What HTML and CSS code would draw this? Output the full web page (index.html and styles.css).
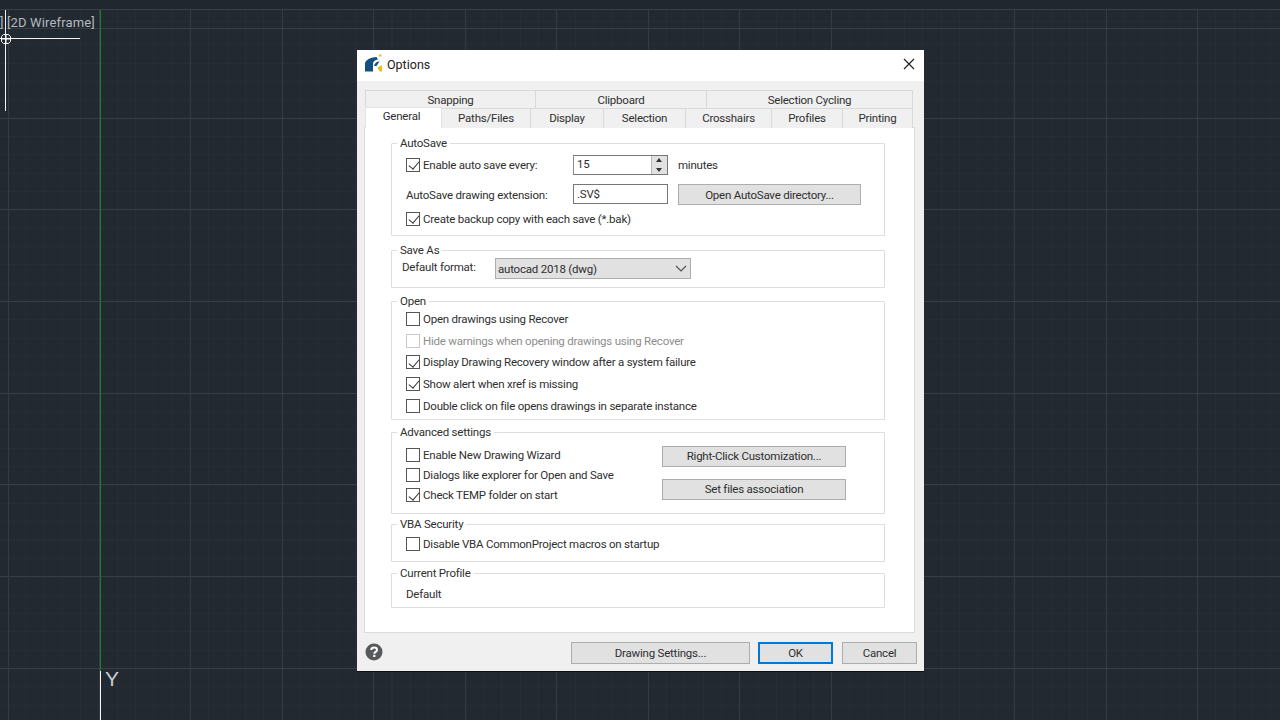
FILE: index.html
```html
<!DOCTYPE html>
<html lang="en">
<head>
<meta charset="utf-8">
<title>Options</title>
<link rel="stylesheet" href="styles.css">
</head>
<body>
<main class="canvas">
  <div class="view-label">] [2D Wireframe]</div>
  <div class="cross-h"></div>
  <div class="cross-v"></div>
  <svg class="cross-box" width="12" height="12" viewBox="0 0 12 12"><path d="M3.500 1.500h5l2 2v5l-2 2h-5l-2-2v-5zM1.500 6h9M6 1.500v9" fill="none" stroke="#fff" stroke-width="1"/></svg>
  <div class="axis-green"></div>
  <div class="axis-white"></div>
  <div class="axis-y">Y</div>

  <section class="dialog">
    <header class="titlebar">
      <svg class="logo" width="20" height="20" viewBox="0 0 20 20">
        <path d="M1 17.500V9C2 6 6 3.500 12.500 3L14 5.500C11 6 9 7.500 9 10V17.500Z" fill="#14507f"/>
        <path d="M10 12C10.500 9.500 12.500 7.500 15.500 7.500L12.500 12Z" fill="#14507f"/>
        <path d="M13.500 13.500L18 11V17.500H15.500Z" fill="#f3bb16"/>
        <path d="M15 .5H17.500V2.500H15Z" fill="#f3bb16"/>
      </svg>
      <span class="title">Options</span>
      <svg class="close" width="12" height="12" viewBox="0 0 12 12"><path d="M1 1L11 11M11 1L1 11" stroke="#222" stroke-width="1.200"/></svg>
    </header>

    <div class="content">
      <nav class="tabs-back">
        <div class="tab w-snap">Snapping</div>
        <div class="tab w-clip">Clipboard</div>
        <div class="tab w-cycle">Selection Cycling</div>
      </nav>
      <nav class="tabs-front">
        <div class="tab tab-active w-general">General</div>
        <div class="tab w-paths">Paths/Files</div>
        <div class="tab w-display">Display</div>
        <div class="tab w-sel">Selection</div>
        <div class="tab w-cross">Crosshairs</div>
        <div class="tab w-prof">Profiles</div>
        <div class="tab w-print">Printing</div>
      </nav>

      <div class="page">
        <section class="group g-autosave">
          <h2 class="legend">AutoSave</h2>
          <div class="row r-save1">
            <label class="check"><span class="box on"></span>Enable auto save every:</label>
            <div class="spin"><span class="spin-value">15</span><span class="spin-btns"><i class="up"></i><i class="down"></i></span></div>
            <span class="minutes">minutes</span>
          </div>
          <div class="row r-save2">
            <span class="ext-label">AutoSave drawing extension:</span>
            <div class="input">.SV$</div>
            <button class="btn b-dir">Open AutoSave directory...</button>
          </div>
          <label class="check r-save3"><span class="box on"></span>Create backup copy with each save (*.bak)</label>
        </section>

        <section class="group g-saveas">
          <h2 class="legend">Save As</h2>
          <div class="row">
            <span class="fmt-label">Default format:</span>
            <div class="select"><span class="select-value">autocad 2018 (dwg)</span><svg width="12" height="7" viewBox="0 0 12 7"><path d="M1 1L6 6L11 1" fill="none" stroke="#555" stroke-width="1.200"/></svg></div>
          </div>
        </section>

        <section class="group g-open">
          <h2 class="legend">Open</h2>
          <label class="check"><span class="box"></span>Open drawings using Recover</label>
          <label class="check off"><span class="box"></span>Hide warnings when opening drawings using Recover</label>
          <label class="check"><span class="box on"></span>Display Drawing Recovery window after a system failure</label>
          <label class="check"><span class="box on"></span>Show alert when xref is missing</label>
          <label class="check"><span class="box"></span>Double click on file opens drawings in separate instance</label>
        </section>

        <section class="group g-adv">
          <h2 class="legend">Advanced settings</h2>
          <div class="adv-checks">
            <label class="check"><span class="box"></span>Enable New Drawing Wizard</label>
            <label class="check"><span class="box"></span>Dialogs like explorer for Open and Save</label>
            <label class="check"><span class="box on"></span>Check TEMP folder on start</label>
          </div>
          <div class="adv-btns">
            <button class="btn b-adv">Right-Click Customization...</button>
            <button class="btn b-adv">Set files association</button>
          </div>
        </section>

        <section class="group g-vba">
          <h2 class="legend">VBA Security</h2>
          <label class="check"><span class="box"></span>Disable VBA CommonProject macros on startup</label>
        </section>

        <section class="group g-profile">
          <h2 class="legend">Current Profile</h2>
          <div class="profile-name">Default</div>
        </section>
      </div>
    </div>

    <footer class="footer">
      <svg class="help" width="18" height="18" viewBox="0 0 18 18"><circle cx="9" cy="9" r="8.500" fill="#58595b"/><path d="M6.200 7C6.300 5.300 7.500 4.500 9.100 4.500C10.800 4.500 12 5.400 12 6.900C12 8.800 9.300 8.900 9.300 10.700" fill="none" stroke="#fff" stroke-width="2"/><rect x="8.200" y="11.800" width="2.200" height="2.200" fill="#fff"/></svg>
      <button class="btn f-draw">Drawing Settings...</button>
      <button class="btn f-ok">OK</button>
      <button class="btn f-cancel">Cancel</button>
    </footer>
  </section>
</main>
</body>
</html>
```
FILE: styles.css
```css
* { box-sizing: border-box; }
html, body { margin: 0; padding: 0; width: 1280px; height: 720px; overflow: hidden; }
body { font-family: Roboto, "Liberation Sans", sans-serif; }

.canvas {
  position: relative;
  width: 1280px;
  height: 720px;
  background-color: #222931;
  background-image:
    linear-gradient(#21272f, #21272f),
    linear-gradient(#373e48, #373e48),
    linear-gradient(#373e48, #373e48),
    linear-gradient(#343b45, #343b45),
    repeating-linear-gradient(to bottom, transparent 0, transparent 90.7px, #373e48 90.7px, #373e48 91.7px),
    repeating-linear-gradient(to right, transparent 0, transparent 90.55px, #343b45 90.55px, #343b45 91.55px),
    repeating-linear-gradient(to right, transparent 0, transparent 17.3px, #262d36 17.3px, #262d36 18.31px),
    repeating-linear-gradient(to bottom, transparent 0, transparent 17.3px, #262d36 17.3px, #262d36 18.34px);
  background-size: 100% 9px, 100% 1px, 100% 1px, 1px 100%, 100% 100%, 100% 100%, 100% 100%, 100% 100%;
  background-position: 0 0, 0 9px, 0 28px, 8px 0, 0 27px, 8px 0, 8px 0, 0 27px;
  background-repeat: no-repeat, no-repeat, no-repeat, no-repeat, repeat, repeat, repeat, repeat;
}

.view-label {
  position: absolute; left: 0; top: 15px;
  font: 13px/16px Roboto, sans-serif;
  letter-spacing: 0.15px;
  color: #b4b9be;
  white-space: nowrap;
}
.cross-h { position: absolute; left: 0; top: 38px; width: 80px; height: 1px; background: #f2f2f2; }
.cross-v { position: absolute; left: 5px; top: 10px; width: 1px; height: 101px; background: #f2f2f2; }
.cross-box { position: absolute; left: 0; top: 33px; }
.axis-green { position: absolute; left: 100px; top: 10px; width: 1px; height: 661px; background: #13862c; }
.axis-white { position: absolute; left: 100px; top: 671px; width: 1px; height: 49px; background: #f5f5f5; }
.axis-y { position: absolute; left: 105px; top: 667px; font: 21px/24px "Liberation Sans", sans-serif; color: #c8ccd0; }

.dialog {
  position: absolute; left: 357px; top: 50px;
  width: 567px; height: 621px;
  background: #f0f0f0;
  display: flex; flex-direction: column;
  box-shadow: 0 1px 0 #111;
  font-size: 11.5px;
  line-height: 16px;
  letter-spacing: -0.22px;
  color: #2f2f2f;
}
.titlebar {
  height: 31px; background: #fff;
  display: flex; align-items: center;
  padding: 0 9px 2px 7px;
}
.logo { margin-right: 3px; flex: none; }
.title { font-size: 12.500px; letter-spacing: 0; color: #222; flex: 1; padding-top: 2px; }
.close { flex: none; }

.content { padding: 9px 8px 0 7px; flex: 1; display: flex; flex-direction: column; }
.tabs-back, .tabs-front { display: flex; padding-left: 1px; }
.tabs-back { height: 18px; }
.tabs-front { height: 20px; position: relative; z-index: 1; }
.tab {
  background: #f0f0f0;
  border: 1px solid #d9d9d9; border-bottom: 0; border-left-width: 0;
  display: flex; align-items: center; justify-content: center;
}
.tabs-back .tab { padding-top: 2px; }
.tabs-back .tab:first-child, .tabs-front .tab:first-child { border-left-width: 1px; }
.tab-active { background: #fff; margin-top: -1px; height: 21px; padding: 0 4px 3px 0; border-color: #e4e4e4; }
.w-snap { width: 171px; } .w-clip { width: 171px; } .w-cycle { width: 206px; }
.w-general { width: 77px; } .w-paths { width: 89px; } .w-display { width: 73px; }
.w-sel { width: 82px; } .w-cross { width: 86px; } .w-prof { width: 71px; } .w-print { width: 70px; }

.page {
  background: #fff;
  border: 1px solid #dcdcdc; 
  margin-top: -1px;
  width: 551px; height: 506px;
  padding: 15px 29px 0 26px;
}
.group {
  border: 1px solid #dedede;
  border-radius: 1px;
  position: relative;
  width: 494px;
  padding-left: 14px;
}
.legend {
  position: absolute; left: 5px; top: -8px;
  margin: 0; padding: 0 3px;
  background: #fff;
  font: inherit; line-height: 14px;
}
.row { display: flex; align-items: center; }

.check { display: flex; align-items: center; white-space: nowrap; }
.box {
  width: 14px; height: 14px; flex: none;
  border: 1px solid #555; background: #fff;
  margin-right: 3px;
  position: relative;
}
.box.on::after {
  content: ""; position: absolute; left: 3.500px; top: 0.500px;
  width: 5px; height: 9px;
  border: solid #333; border-width: 0 1.500px 1.500px 0;
  transform: rotate(40deg);
}
.check.off { color: #8d8d8d; }
.check.off .box { border-color: #c8c8c8; }

.g-autosave { height: 93px; padding-top: 11px; }
.r-save1 { height: 20px; }
.r-save1 .check { width: 167px; }
.spin { width: 95px; height: 20px; display: flex; border: 1px solid #767676; border-left-color: #8a8a8a; }
.spin-value { flex: 1; padding-left: 3px; line-height: 17px; }
.spin-btns { width: 16px; display: flex; flex-direction: column; background: #e1e1e1; border-left: 1px solid #b5b5b5; }
.spin-btns i { flex: 1; position: relative; display: block; }
.spin-btns .up::after, .spin-btns .down::after {
  content: ""; position: absolute; left: 4px; border-left: 3.500px solid transparent; border-right: 3.500px solid transparent;
}
.spin-btns .up::after { top: 2px; border-bottom: 4px solid #333; }
.spin-btns .down::after { top: 3px; border-top: 4px solid #333; }
.minutes { margin-left: 10px; }
.r-save2 { height: 21px; margin-top: 9px; }
.ext-label { width: 167px; padding-top: 1px; }
.input { width: 95px; height: 20px; border: 1px solid #767676; padding-left: 3px; line-height: 18px; }
.btn {
  background: #e1e1e1; border: 1px solid #adadad; border-radius: 0;
  font: inherit; letter-spacing: inherit; color: inherit; padding: 0;
  display: block;
}
.b-dir { width: 183px; height: 21px; margin-left: 10px; padding-top: 1px; }
.r-save3 { margin-top: 4px; height: 20px; }

.g-saveas { height: 38px; margin-top: 14px; padding: 7px 0 0 10px; }
.fmt-label { width: 93px; margin-top: -2px; }
.select {
  width: 196px; height: 21px; background: #e1e1e1; border: 1px solid #adadad;
  display: flex; align-items: center; justify-content: space-between; padding: 0 3px 0 2px;
}
.select-value { padding-top: 1px; }

.g-open { height: 119px; margin-top: 13px; padding-top: 7px; }
.g-open .check { height: 21.500px; }
.g-open .check:last-child { margin-top: 1px; }

.g-adv { height: 82px; margin-top: 12px; padding-top: 12px; display: flex; }
.adv-checks { width: 256px; }
.adv-checks .check { height: 20.300px; }
.adv-btns { display: flex; flex-direction: column; gap: 12px; margin-top: 1px; }
.b-adv { width: 184px; height: 21px; }

.g-vba { height: 38px; margin-top: 10px; padding-top: 11px; }
.g-profile { height: 35px; margin-top: 11px; padding-top: 12px; }
.profile-name { line-height: 16px; }

.footer { height: 39px; display: flex; align-items: flex-start; padding: 0 7px 0 8px; }
.help { margin-top: 10px; flex: none; margin-right: auto; }
.footer .btn { height: 22px; margin-top: 9px; }
.f-draw { width: 179px; }
.f-ok { width: 75px; margin-left: 8px; border: 2px solid #0078d7; }
.f-cancel { width: 75px; margin-left: 9px; }
```
